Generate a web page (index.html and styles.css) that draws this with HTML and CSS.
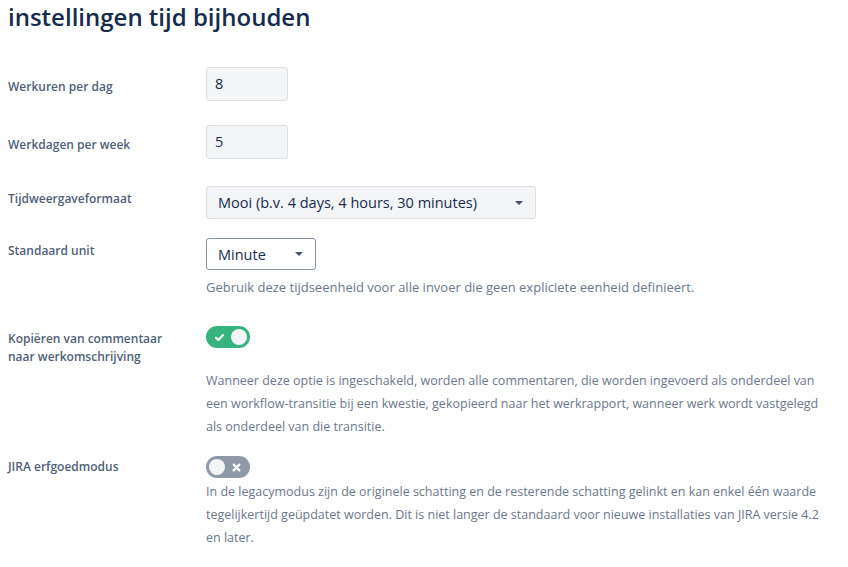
FILE: index.html
```html
<!DOCTYPE html>
<html lang="nl">
<head>
<meta charset="utf-8">
<title>instellingen tijd bijhouden</title>
<link rel="stylesheet" href="styles.css">
</head>
<body>
<div class="page">
  <div class="title-box"><h1 class="title">instellingen tijd bijhouden</h1></div>

  <div class="row row-1">
    <div class="label lbl-input">Werkuren per dag</div>
    <div class="field"><div class="text-input">8</div></div>
  </div>

  <div class="row row-2">
    <div class="label lbl-input">Werkdagen per week</div>
    <div class="field"><div class="text-input">5</div></div>
  </div>

  <div class="row row-3">
    <div class="label lbl-select">Tijdweergaveformaat</div>
    <div class="field">
      <div class="select select-wide"><span>Mooi (b.v. 4 days, 4 hours, 30 minutes)</span><span class="caret"></span></div>
    </div>
  </div>

  <div class="row row-4">
    <div class="label lbl-select">Standaard unit</div>
    <div class="field">
      <div class="select select-small"><span>Minute</span><span class="caret"></span></div>
      <p class="desc desc-unit">Gebruik deze tijdseenheid voor alle invoer die geen expliciete eenheid definieert.</p>
    </div>
  </div>

  <div class="row row-5">
    <div class="label lbl-toggle">Kopiëren van commentaar naar werkomschrijving</div>
    <div class="field">
      <div class="toggle toggle-on">
        <svg class="toggle-icon" width="11" height="11" viewBox="0 0 10 10"><path d="M1.8 5.2 L4 7.2 L8.2 2.8" fill="none" stroke="#fff" stroke-width="1.9" stroke-linecap="round" stroke-linejoin="round"/></svg>
        <span class="knob"></span>
      </div>
      <p class="desc desc-copy">Wanneer deze optie is ingeschakeld, worden alle commentaren, die worden ingevoerd als onderdeel van een workflow-transitie bij een kwestie, gekopieerd naar het werkrapport, wanneer werk wordt vastgelegd als onderdeel van die transitie.</p>
    </div>
  </div>

  <div class="row row-6">
    <div class="label lbl-toggle2">JIRA erfgoedmodus</div>
    <div class="field">
      <div class="toggle toggle-off">
        <span class="knob"></span>
        <svg class="toggle-icon" width="11" height="11" viewBox="0 0 10 10"><path d="M2.4 2.4 L7.6 7.6 M7.6 2.4 L2.4 7.6" fill="none" stroke="#fff" stroke-width="2" stroke-linecap="round"/></svg>
      </div>
      <p class="desc desc-legacy">In de legacymodus zijn de originele schatting en de resterende schatting gelinkt en kan enkel één waarde tegelijkertijd geüpdatet worden. Dit is niet langer de standaard voor nieuwe installaties van JIRA versie 4.2 en later.</p>
    </div>
  </div>
</div>
</body>
</html>
```

FILE: styles.css
```css
html, body {
  margin: 0;
  padding: 0;
  background: #ffffff;
}

body {
  font-family: "Open Sans", "Noto Sans", sans-serif;
  color: #172b4d;
}

.page {
  padding: 0 8px;
  width: 832px;
}

.title-box {
  height: 30px;
}

.title {
  margin: 0;
  padding-top: 2px;
  font-size: 24px;
  font-weight: 600;
  line-height: 30px;
  color: #172b4d;
}

.row {
  display: flex;
  align-items: flex-start;
}

.row-1 { margin-top: 37px; }
.row-2 { margin-top: 24px; }
.row-3 { margin-top: 27px; }
.row-4 { margin-top: 19px; }
.row-5 { margin-top: 27px; }
.row-6 { margin-top: 18px; }

.label {
  width: 198px;
  flex: none;
  font-size: 12px;
  font-weight: 600;
  line-height: 18px;
  color: #505f79;
}

.lbl-input { padding-top: 11px; }
.lbl-select { padding-top: 4px; }
.lbl-toggle { padding-top: 4px; width: 170px; margin-right: 28px; }
.lbl-toggle2 { padding-top: 2px; }

.field {
  width: 625px;
}

.text-input {
  box-sizing: border-box;
  width: 82px;
  height: 34px;
  background: #f4f5f7;
  border: 1px solid #dfe1e6;
  border-radius: 3px;
  padding: 0 8px;
  font-size: 14.5px;
  line-height: 32px;
  color: #172b4d;
}

.select {
  box-sizing: border-box;
  display: flex;
  align-items: center;
  justify-content: space-between;
  border-radius: 3px;
  font-size: 14.5px;
  color: #172b4d;
}

.select-wide {
  width: 330px;
  height: 33px;
  padding: 0 12px 0 11px;
  background: #f4f5f7;
  border: 1px solid #dfe1e6;
}

.select-small {
  width: 110px;
  height: 32px;
  padding: 0 12px 0 11px;
  background: #ffffff;
  border: 1px solid #8993a4;
}

.caret {
  width: 0;
  height: 0;
  border-left: 4px solid transparent;
  border-right: 4px solid transparent;
  border-top: 4px solid #42526e;
}

.desc {
  margin: 0;
  font-size: 12.5px;
  line-height: 23px;
  color: #6b778c;
}

.desc-unit { margin-top: 6px; font-size: 13px; }
.desc-copy { margin-top: 21px; }
.desc-legacy { margin-top: 2px; }

.toggle {
  box-sizing: border-box;
  width: 44px;
  height: 22px;
  border-radius: 11px;
  display: flex;
  align-items: center;
  justify-content: space-between;
  padding: 0 3px 0 8px;
}

.toggle-on {
  background: #36b37e;
}

.toggle-off {
  background: #8f99a8;
  padding: 0 8px 0 3px;
}

.knob {
  width: 16px;
  height: 16px;
  border-radius: 50%;
  background: #f4f5f7;
}

.toggle-icon {
  display: block;
}
```
